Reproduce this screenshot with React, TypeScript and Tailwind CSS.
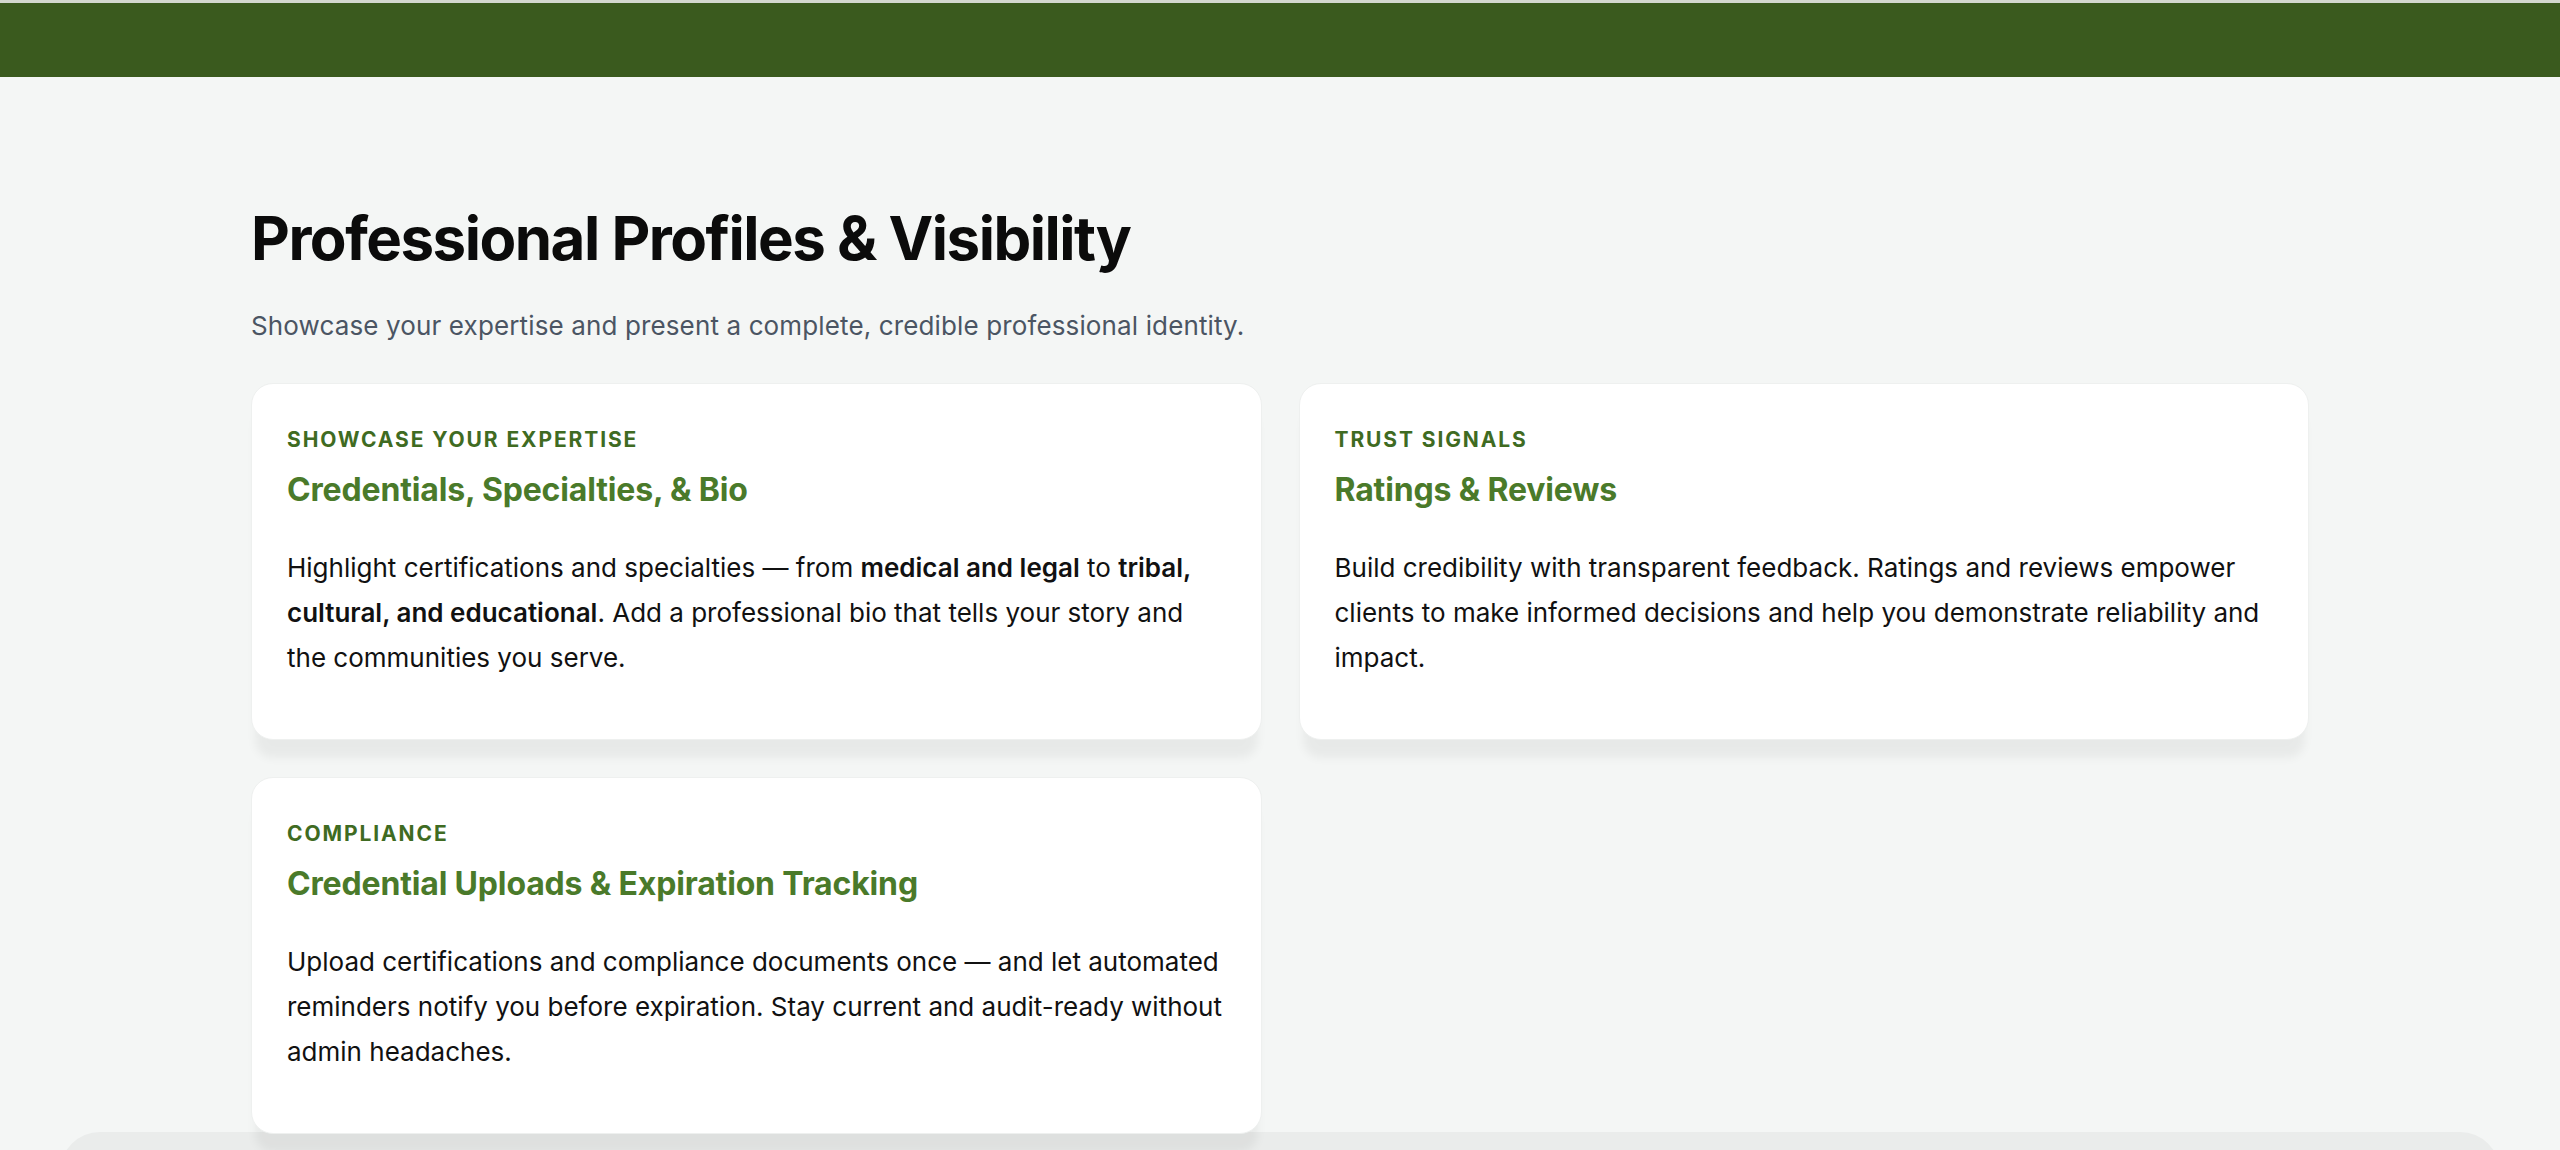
import type { ReactNode } from "react";

type Feature = {
  eyebrow: string;
  title: string;
  body: ReactNode;
};

const features: Feature[] = [
  {
    eyebrow: "Showcase your expertise",
    title: "Credentials, Specialties, & Bio",
    body: (
      <>
        Highlight certifications and specialties — from <strong className="font-semibold">medical and legal</strong> to{" "}
        <strong className="font-semibold">tribal, cultural, and educational</strong>. Add a professional bio that tells
        your story and the communities you serve.
      </>
    ),
  },
  {
    eyebrow: "Trust signals",
    title: "Ratings & Reviews",
    body: (
      <>
        Build credibility with transparent feedback. Ratings and reviews empower clients to make informed decisions and
        help you demonstrate reliability and impact.
      </>
    ),
  },
  {
    eyebrow: "Compliance",
    title: "Credential Uploads & Expiration Tracking",
    body: (
      <>
        Upload certifications and compliance documents once — and let automated reminders notify you before
        expiration. Stay current and audit-ready without admin headaches.
      </>
    ),
  },
];

function FeatureCard({ feature }: { feature: Feature }) {
  return (
    <div className="rounded-[22px] border border-[#eef0ef] bg-white px-[35px] pt-[42px] pb-[59px] shadow-[0_22px_10px_-4px_rgba(0,0,0,0.05)]">
      <p className="text-[21px] leading-[28px] font-bold uppercase tracking-[0.09em] text-[#3f6b22]">
        {feature.eyebrow}
      </p>
      <h3 className="mt-[16px] text-[32px] leading-[40px] font-bold tracking-[-0.005em] text-[#4a7a2a]">
        {feature.title}
      </h3>
      <p className="mt-[35px] text-[26px] leading-[45px] text-[#111111]">{feature.body}</p>
    </div>
  );
}

export default function App() {
  return (
    <div
      className="min-h-screen overflow-hidden bg-[#f4f6f5]"
      style={{ fontFamily: "Inter, 'Noto Sans', 'Liberation Sans', sans-serif" }}
    >
      {/* Top brand bar */}
      <div className="h-[77px] border-t-[3px] border-[#d3d8cf] bg-[#3a5a1e]" />

      <section className="relative z-10 mx-auto w-[2058px] pt-[125px]">
        <h2 className="text-[60px] leading-[72px] font-bold tracking-[-0.025em] text-[#0b0b0b]">
          Professional Profiles &amp; Visibility
        </h2>
        <p className="mt-[34px] text-[26px] leading-[36px] tracking-[0.005em] text-[#4b5563]">
          Showcase your expertise and present a complete, credible professional identity.
        </p>

        <div className="mt-[39px] grid grid-cols-2 gap-[37px]">
          {features.map((f) => (
            <FeatureCard key={f.title} feature={f} />
          ))}
        </div>
      </section>

      {/* Next section peeking in at the bottom */}
      <div className="mx-[60px] -mt-[2px] h-[40px] rounded-t-[60px] bg-[#eaeceb]" />
    </div>
  );
}
